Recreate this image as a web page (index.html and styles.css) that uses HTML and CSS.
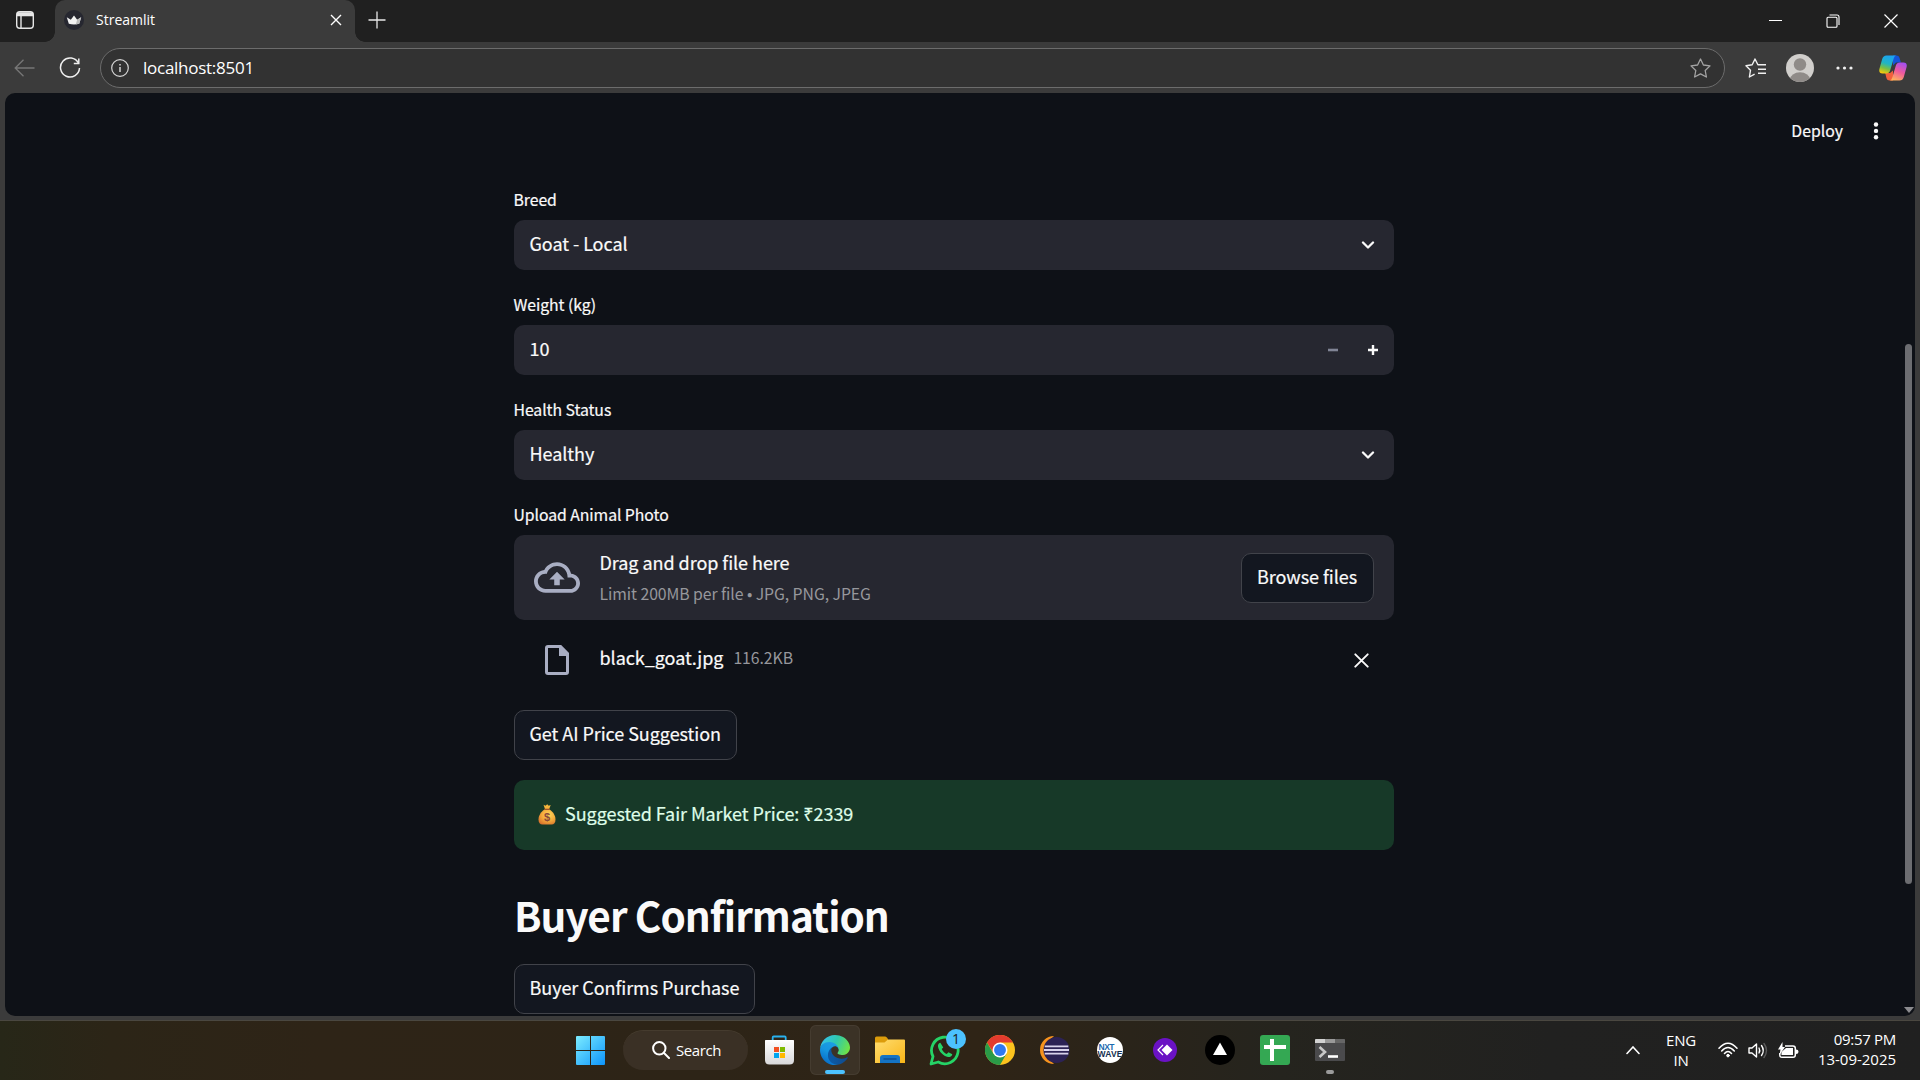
FILE: index.html
```html
<!DOCTYPE html>
<html lang="en">
<head>
<meta charset="utf-8">
<title>Streamlit</title>
<link rel="stylesheet" href="styles.css">
</head>
<body>
<div class="screen">
  <header class="titlebar">
    <div class="tab-actions">
      <svg width="20" height="20" viewBox="0 0 20 20" fill="none" stroke="#e6e6e6" stroke-width="1.4"><rect x="1.7" y="1.7" width="16.6" height="16.6" rx="3"/><path d="M2 3.4h16M2 5h16" stroke-width="2.4"/><path d="M6 6v12"/></svg>
    </div>
    <div class="tab">
      <svg class="favicon" width="20" height="20" viewBox="0 0 20 20"><circle cx="10" cy="10" r="10" fill="#262730"/><path d="M2.8 7.2l4 2.6L10 5.6l3.2 4.2 4-2.6-2 6.6q-5.2 1.600-10.400 0z" fill="#f2f2f2"/><path d="M13.200 9.800l4-2.600-2 6.600-3.500.7z" fill="#bdbdbd"/></svg>
      <span class="tab-title">Streamlit</span>
      <svg class="tab-close" width="12" height="12" viewBox="0 0 12 12" stroke="#fff" stroke-width="1.4"><path d="M1 1l10 10M11 1L1 11"/></svg>
    </div>
    <svg class="new-tab" width="18" height="18" viewBox="0 0 18 18" stroke="#e8e8e8" stroke-width="1.3"><path d="M9 .5v17M.5 9h17"/></svg>
    <div class="window-controls">
      <svg width="13" height="13" viewBox="0 0 13 13" stroke="#fff" stroke-width="1"><path d="M0 5.500h13"/></svg>
      <svg width="14" height="14" viewBox="0 0 14 14" stroke="#fff" stroke-width="1.1" fill="none"><rect x="1" y="3.300" width="10" height="10" rx="1"/><path d="M3.500 1h7.500q2 0 2 2v8"/></svg>
      <svg width="14" height="14" viewBox="0 0 14 14" stroke="#fff" stroke-width="1.2"><path d="M.5.5l13 13M13.500.5l-13 13"/></svg>
    </div>
  </header>

  <nav class="toolbar">
    <svg class="back" width="21" height="18" viewBox="0 0 21 18" fill="none" stroke="#777" stroke-width="1.3"><path d="M20.500 9H1.200M9.500.8L1.200 9l8.300 8.200"/></svg>
    <svg class="reload" width="22" height="22" viewBox="0 0 22 22" fill="none" stroke="#efefef" stroke-width="1.500"><path d="M19.500 6.200A9.500 9.500 0 1 0 20.500 11"/><path d="M19.800 1.500v5h-5"/></svg>
    <div class="address">
      <svg width="18" height="18" viewBox="0 0 18 18" fill="none" stroke="#d6d6d6" stroke-width="1.200"><circle cx="9" cy="9" r="8.300"/><path d="M9 8v5M9 5v1.500" stroke-width="1.500"/></svg>
      <span class="url">localhost:8501</span>
      <svg class="star" width="21" height="20" viewBox="0 0 21 20" fill="none" stroke="#a4a4a4" stroke-width="1.300" stroke-linejoin="round"><path d="M10.500 1l2.900 6 6.600.9-4.800 4.600 1.200 6.500-5.900-3.100L4.600 19l1.200-6.500L1 7.900 7.600 7z"/></svg>
    </div>
    <div class="browser-tools">
      <svg width="22" height="20" viewBox="0 0 22 20" fill="none" stroke="#f0f0f0" stroke-width="1.400" stroke-linejoin="round"><path d="M13 6.800h-.1L10 1 7.200 6.800 1 7.800l4.500 4.400L4.400 19l5.200-2.800M13 6.800h8M13 11.200h8M13 15.200h8"/></svg>
      <svg class="avatar" width="28" height="28" viewBox="0 0 28 28"><defs><clipPath id="avatar"><circle cx="14" cy="14" r="14"/></clipPath></defs><g clip-path="url(#avatar)"><rect width="28" height="28" fill="#d1cfcc"/><circle cx="14" cy="10.500" r="6.200" fill="#8f8b88"/><ellipse cx="14" cy="25.500" rx="10" ry="7.200" fill="#8f8b88"/></g></svg>
      <svg class="more" width="17" height="4" viewBox="0 0 17 4" fill="#f0f0f0"><circle cx="2" cy="2" r="1.600"/><circle cx="8.500" cy="2" r="1.600"/><circle cx="15" cy="2" r="1.600"/></svg>
      <svg class="copilot" width="28" height="26" viewBox="0 0 28 26"><defs>
        <linearGradient id="cp1" x1=".6" y1="0" x2=".3" y2="1"><stop offset="0" stop-color="#1ba2f2"/><stop offset=".45" stop-color="#21b5c4"/><stop offset=".72" stop-color="#78c046"/><stop offset="1" stop-color="#f7c90c"/></linearGradient>
        <linearGradient id="cp2" x1=".7" y1="0" x2=".3" y2="1"><stop offset="0" stop-color="#a44ff0"/><stop offset=".5" stop-color="#f05a9c"/><stop offset="1" stop-color="#ffb35c"/></linearGradient></defs>
        <path d="M14 .5h3.500q2.300 0 3 2.300l1.400 4.700H17l-3 3z" fill="#1554d8"/>
        <path d="M14 25.500h-3.500q-2.300 0-3-2.300L6.200 18H11l3-2.500z" fill="#f2603c"/>
        <path d="M7.500.5H17q-1.600.6-2.300 3l-3.500 11.800Q10.200 18.500 7 18.500H3.500Q-.5 18.500.4 14L3.200 4Q4.200.5 7.500.5z" fill="url(#cp1)"/>
        <path d="M20.500 25.500H11q1.600-.6 2.300-3l3.500-11.800q1-3.200 4.200-3.200h3.500q4 0 3.100 4.500L24.800 22q-1 3.500-4.300 3.500z" fill="url(#cp2)"/></svg>
    </div>
  </nav>

  <div class="viewport">
    <div class="app-header">
      <span class="deploy">Deploy</span>
      <svg width="6" height="18" viewBox="0 0 6 18" fill="#fafafa"><circle cx="3" cy="2.500" r="2.200"/><circle cx="3" cy="8.900" r="2.200"/><circle cx="3" cy="15.300" r="2.200"/></svg>
    </div>
    <main class="column">
      <section class="field">
        <label class="label">Breed</label>
        <div class="control"><span class="text">Goat - Local</span>
          <svg class="chevron" width="14" height="9" viewBox="0 0 14 9" fill="none" stroke="#fafafa" stroke-width="2.300" stroke-linecap="round" stroke-linejoin="round"><path d="M2 1.500l5 5 5-5"/></svg></div>
      </section>
      <section class="field">
        <label class="label">Weight (kg)</label>
        <div class="control"><span class="text">10</span>
          <div class="steppers">
            <svg width="10" height="10" viewBox="0 0 10 10"><path d="M0 3.700h10v2.600H0z" fill="#808495"/></svg>
            <svg width="10" height="10" viewBox="0 0 10 10"><path d="M0 5h10M5 0v10" stroke="#fafafa" stroke-width="2.400"/></svg>
          </div></div>
      </section>
      <section class="field">
        <label class="label">Health Status</label>
        <div class="control"><span class="text">Healthy</span>
          <svg class="chevron" width="14" height="9" viewBox="0 0 14 9" fill="none" stroke="#fafafa" stroke-width="2.300" stroke-linecap="round" stroke-linejoin="round"><path d="M2 1.500l5 5 5-5"/></svg></div>
      </section>
      <section class="field">
        <label class="label">Upload Animal Photo</label>
        <div class="dropzone">
          <svg class="cloud" width="46" height="31" viewBox="0 4 24 16" fill="#a9aec3"><path d="M19.350 10.040C18.670 6.590 15.640 4 12 4 9.110 4 6.600 5.640 5.350 8.040 2.340 8.360 0 10.910 0 14c0 3.310 2.690 6 6 6h13c2.760 0 5-2.240 5-5 0-2.640-2.050-4.780-4.650-4.960zM19 18H6c-2.210 0-4-1.790-4-4s1.790-4 4-4h.71C7.370 7.690 9.480 6 12 6c3.040 0 5.500 2.460 5.500 5.500v.5H19c1.660 0 3 1.340 3 3s-1.340 3-3 3zM8 13h2.550v3h2.900v-3H16l-4-4z"/></svg>
          <div class="drop-text">
            <span class="text">Drag and drop file here</span>
            <span class="small">Limit 200MB per file • JPG, PNG, JPEG</span>
          </div>
          <button class="button"><span class="text">Browse files</span></button>
        </div>
        <div class="file-row">
          <svg width="24" height="30" viewBox="0 0 24 30" fill="none"><path d="M3 1.500h12.500l7 7V27q0 1.500-1.500 1.500H3q-1.500 0-1.500-1.500V3Q1.500 1.500 3 1.500z" stroke="#a9aec3" stroke-width="3"/><path d="M14 0v11h10v-2.500L15.500 0z" fill="#a9aec3"/></svg>
          <span class="text file-name">black_goat.jpg</span>
          <span class="small file-size">116.2KB</span>
          <svg class="remove" width="15" height="15" viewBox="0 0 15 15" stroke="#fafafa" stroke-width="1.900" stroke-linecap="round"><path d="M1.300 1.300l12.400 12.400M13.700 1.300L1.300 13.700"/></svg>
        </div>
      </section>
      <button class="button"><span class="text">Get AI Price Suggestion</span></button>
      <div class="alert">
        <svg width="18" height="21" viewBox="0 0 18 21"><defs><radialGradient id="bag" cx=".6" cy=".35" r=".75"><stop offset="0" stop-color="#ffd75a"/><stop offset=".55" stop-color="#f3a83a"/><stop offset="1" stop-color="#d8702c"/></radialGradient></defs><path d="M5.500.8l2 1L9.200.3l1.500 1.400 2-.8-1.500 4H7z" fill="#f6b53c"/><path d="M6.500 5.500h5c3 2 6 5.500 6 10 0 3.500-1.500 5-4 5h-9c-2.500 0-4-1.500-4-5 0-4.500 3-8 6-10z" fill="url(#bag)"/><path d="M6.200 5.300h5.600" stroke="#a4552a" stroke-width="1.300"/><text x="9" y="17.400" font-size="11" font-weight="bold" text-anchor="middle" fill="#8a4a3a" font-family="Liberation Sans, sans-serif">$</text></svg>
        <span class="text">Suggested Fair Market Price: ₹2339</span>
      </div>
      <h2 class="heading">Buyer Confirmation</h2>
      <button class="button"><span class="text">Buyer Confirms Purchase</span></button>
    </main>
    <div class="scroll-thumb"></div>
    <div class="scroll-arrow"></div>
  </div>

  <footer class="taskbar">
    <div class="apps">
      <div class="app"><svg width="29" height="29" viewBox="0 0 29 29"><defs><linearGradient id="win" x1="0" y1="0" x2="1" y2="1"><stop offset="0" stop-color="#7cecff"/><stop offset="1" stop-color="#0d94fb"/></linearGradient></defs><path d="M1 0h13v14H0V1q0-1 1-1zM15 0h13q1 0 1 1v13H15zM0 15h14v14H1q-1 0-1-1zM15 15h14v13q0 1-1 1H15z" fill="url(#win)"/></svg></div>
      <div class="search"><svg width="18" height="18" viewBox="0 0 18 18" fill="none" stroke="#fff" stroke-width="2" stroke-linecap="round"><circle cx="7.300" cy="7.300" r="6.200"/><path d="M12 12l5 5"/></svg><span>Search</span></div>
      <div class="app"><svg width="30" height="30" viewBox="0 0 30 30"><defs><linearGradient id="store" x1="0" y1="0" x2="0" y2="1"><stop offset="0" stop-color="#fff"/><stop offset="1" stop-color="#d8d8da"/></linearGradient></defs><path d="M7.700 6V2.500q0-1 1-1h11q1 0 1 1V6" fill="none" stroke="#29b2ef" stroke-width="1.800"/><path d="M.5 5h28q.5 0 .5.800V25q0 4.500-4.500 4.500h-20Q0 29.500 0 25V5.800Q0 5 .5 5z" fill="url(#store)"/><path d="M9 12h5v5H9z" fill="#f25022"/><path d="M15 12h5v5h-5z" fill="#7fba00"/><path d="M9 18h5v5H9z" fill="#00a4ef"/><path d="M15 18h5v5h-5z" fill="#ffb900"/></svg></div>
      <div class="app active"><svg width="30" height="30" viewBox="0 0 256 256"><defs><linearGradient id="e1" x1=".25" y1=".7" x2="1" y2=".7"><stop offset="0" stop-color="#0c59a4"/><stop offset="1" stop-color="#114a8b"/></linearGradient><linearGradient id="e2" x1=".6" y1=".1" x2=".2" y2="1"><stop offset="0" stop-color="#1b9de2"/><stop offset=".4" stop-color="#1595df"/><stop offset="1" stop-color="#0566c4"/></linearGradient><linearGradient id="e3" x1="0" y1=".3" x2="1" y2=".6"><stop offset="0" stop-color="#35c1f1"/><stop offset=".5" stop-color="#2fc8ac"/><stop offset="1" stop-color="#70e345"/></linearGradient></defs>
        <path fill="url(#e1)" d="M231 190.500c-3.400 1.800-6.900 3.400-10.500 4.700-11.500 4.300-23.600 6.500-35.900 6.500-47.300 0-88.500-32.500-88.500-74.300.1-11.400 6.400-21.900 16.400-27.300-42.800 1.800-53.800 46.400-53.800 72.500 0 74 68.100 81.400 82.800 81.400 7.900 0 19.800-2.300 27-4.600l1.300-.4c27.600-9.500 51-28.100 66.600-52.800 1.200-1.900.6-4.300-1.200-5.500-1.300-.8-2.900-.9-4.200-.2z"/>
        <path fill="url(#e2)" d="M105.700 241.400c-8.900-5.500-16.600-12.800-22.700-21.300-26.300-36-18.400-86.500 17.600-112.800 3.800-2.700 7.700-5.200 11.900-7.200 3.100-1.500 8.400-4.100 15.500-4 10.100.1 19.600 4.900 25.700 13 4 5.400 6.300 11.900 6.400 18.700 0-.2 24.500-79.600-80-79.600C36.200 48.200.2 89.900.2 126.400c-.2 19.300 4 38.500 12.100 56 27.600 58.800 94.800 87.600 156.400 67.100-21.100 6.600-44.100 3.700-63-8.100z"/>
        <path fill="url(#e3)" d="M152.300 148.900c-.8 1-3.300 2.500-3.300 5.700 0 2.600 1.700 5.100 4.700 7.200 14.400 10 41.500 8.700 41.600 8.700 10.700 0 21.100-2.900 30.300-8.300 18.800-11 30.400-31.100 30.400-52.900.3-22.400-8-37.300-11.300-43.900C223.500 23.900 177.700 0 128 0 58 0 1 56.200 0 126.200c.5-36.500 36.800-66 80-66 3.500 0 23.500.3 42 10.100 16.300 8.600 24.900 18.900 30.800 29.200 6.200 10.700 7.300 24.100 7.300 29.500s-2.700 13.300-7.800 19.900z"/></svg></div>
      <div class="app"><svg width="30" height="28" viewBox="0 0 30 28"><defs><linearGradient id="fold" x1="0" y1="0" x2="1" y2="1"><stop offset="0" stop-color="#ffdd70"/><stop offset="1" stop-color="#f9b517"/></linearGradient></defs><path d="M0 2Q0 .5 1.500.5H10q1 0 1.800.9L13 3v5H0z" fill="#dc9c0b"/><path d="M0 6.500h9.500l3.500-3h16q1 0 1 1V27H0z" fill="url(#fold)"/><path d="M5 27v-5q0-3 3-3h14q3 0 3 3v5z" fill="#1473c4"/><path d="M8.500 23h13" stroke="#0b4a8c" stroke-width="1.300"/></svg></div>
      <div class="app"><svg width="32" height="32" viewBox="0 0 32 32"><path d="M2 30l2-7.500A13.300 13.300 0 1 1 9.300 28z" fill="none" stroke="#25d366" stroke-width="2.800" stroke-linejoin="round"/><path d="M11.300 8.800c-1.800.5-2.600 2.200-2.300 4 1 5 5.200 9.200 10 10.200 2 .3 4-.8 4.300-2.800l-3.800-2-1.800 1.800c-2.200-.9-4-2.700-5-5l1.600-1.600z" fill="#25d366"/></svg><span class="badge">1</span></div>
      <div class="app"><svg width="30" height="30" viewBox="0 0 48 48"><circle cx="24" cy="24" r="24" fill="#fcc31e"/><path d="M24 12h20.800A24 24 0 0 0 3.200 12L14 29z" fill="#e33b2e"/><path d="M3.200 12A24 24 0 0 0 24 48L34.400 30 24 24 13.600 30z" fill="#2a9a48"/><circle cx="24" cy="24" r="12" fill="#fff"/><circle cx="24" cy="24" r="9.500" fill="#3079f0"/></svg></div>
      <div class="app"><svg width="30" height="30" viewBox="0 0 30 30"><path d="M14 1A14 14 0 0 0 14 29 18 18 0 0 1 14 1z" fill="#f7941e"/><circle cx="16.500" cy="15" r="13" fill="#2c2255"/><path d="M4.700 11.300h23.600M4 15h25M4.700 18.700h23.600" stroke="#d9d3ec" stroke-width="1.800"/></svg></div>
      <div class="app"><svg width="28" height="28" viewBox="0 0 28 28"><defs><clipPath id="nxt"><circle cx="14" cy="14" r="13"/></clipPath></defs><circle cx="14" cy="14" r="13" fill="#fff"/><g clip-path="url(#nxt)" font-family="Liberation Sans, sans-serif" font-weight="bold" font-size="8.500"><text x="2.500" y="13.500" fill="#1c6bb0" textLength="16">NXT</text><text x="1.500" y="21" fill="#16304f" textLength="25">WAVE</text></g></svg></div>
      <div class="app"><svg width="24" height="24" viewBox="0 0 24 24"><circle cx="12" cy="12" r="12" fill="#6a12c4"/><path d="M14 6.500l5.500 5.500-5.500 5.500L8.500 12z" fill="#fff"/><path d="M10 7l-5 5 5 5" fill="none" stroke="#fff" stroke-width="1.200"/></svg></div>
      <div class="app"><svg width="30" height="30" viewBox="0 0 30 30"><circle cx="15" cy="15" r="15" fill="#000"/><path d="M15 7.500l7 12.500H8z" fill="#fff"/></svg></div>
      <div class="app"><svg width="30" height="30" viewBox="0 0 30 30"><rect width="30" height="30" rx="3" fill="#34a853"/><path d="M4 12h22M12 4v22" stroke="#fff" stroke-width="4"/></svg></div>
      <div class="app running"><svg width="30" height="22" viewBox="0 0 30 22"><rect width="30" height="22" rx="1" fill="#4a4a4c"/><path d="M0 4V1q0-1 1-1h9v4z" fill="#d2d2d2"/><path d="M10 0h10v4H10z" fill="#999"/><path d="M20 0h9q1 0 1 1v3H20z" fill="#666"/><path d="M4.500 8l5.500 5-5.500 5" fill="none" stroke="#c8c8c8" stroke-width="2.600"/><path d="M13 17.500h10" stroke="#fff" stroke-width="2.600"/></svg></div>
    </div>
    <div class="tray">
      <svg class="caret" width="14" height="9" viewBox="0 0 14 9" fill="none" stroke="#fff" stroke-width="1.600" stroke-linecap="round"><path d="M1 7.500L7 1l6 6.500"/></svg>
      <div class="lang"><span>ENG</span><span>IN</span></div>
      <div class="status">
        <svg width="20" height="16" viewBox="0 0 20 16" fill="none" stroke="#fff" stroke-width="1.500" stroke-linecap="round"><path d="M1 6.200Q10-3.800 19 6.200M3.700 9Q10 2 16.300 9M6.500 11.500Q10 7.500 13.500 11.500"/><circle cx="10" cy="13.600" r="1.300" fill="#fff" stroke-width="1"/></svg>
        <svg width="20" height="17" viewBox="0 0 20 17" fill="none" stroke="#fff" stroke-width="1.400" stroke-linejoin="round" stroke-linecap="round"><path d="M1 6h3l4.500-4v13L4 11H1zM11 6q1.500 2.500 0 5M13.500 3.500q3.500 5 0 10"/><path d="M16 1.500q5 7 0 14" stroke="#5a5a5a"/></svg>
        <svg width="21" height="17" viewBox="0 0 21 17"><path d="M7 4h8q2.300 0 2.300 2.300V13q0 2.300-2.300 2.300H4Q1.800 15.300 1.800 13v-2" fill="none" stroke="#fff" stroke-width="1.500"/><path d="M18 7.500q2.500 0 2.500 2.200T18 12z" fill="#fff"/><path d="M8 6h7v7H3.500v-3z" fill="#fff"/><path d="M4.500 0L0 7.500h2.500L1.500 13l5.500-8H4.500z" fill="#fff"/></svg>
      </div>
      <div class="clock"><span class="time">09:57 PM</span><span>13-09-2025</span></div>
    </div>
  </footer>
</div>
</body>
</html>
```
FILE: styles.css
```css
* { box-sizing: border-box; }
body {
  margin: 0;
  width: 1920px;
  height: 1080px;
  overflow: hidden;
  background: #3b3b3b;
  color: #fff;
  font-family: "Open Sans", "Noto Sans", sans-serif;
}
svg { display: block; flex: none; }
.screen { display: flex; flex-direction: column; height: 1080px; }

/* Browser title bar */
.titlebar {
  display: flex;
  align-items: stretch;
  height: 42px;
  background: #202020;
}
.tab-actions {
  width: 55px;
  display: flex;
  align-items: center;
  justify-content: center;
  padding: 0 5px 2px 0;
}
.tab {
  position: relative;
  width: 300px;
  display: flex;
  align-items: center;
  padding: 0 13px 2px 9px;
  border-radius: 10px 10px 0 0;
  background: #3b3b3b;
}
/* Concave feet where the tab meets the toolbar */
.tab::before, .tab::after {
  content: "";
  position: absolute;
  bottom: 0;
  width: 10px;
  height: 10px;
}
.tab::before { left: -10px; background: radial-gradient(circle at 0 0, transparent 9.5px, #3b3b3b 10px); }
.tab::after { right: -10px; background: radial-gradient(circle at 100% 0, transparent 9.5px, #3b3b3b 10px); }
.tab-title { margin-left: 12px; font-size: 14px; letter-spacing: 0; line-height: 20px; white-space: nowrap; }
.tab-close { margin-left: auto; }
.new-tab { margin: 11px 0 0 13px; }
.window-controls { display: flex; align-items: center; gap: 44px; margin-left: auto; padding: 0 22px 0 0; }

/* Navigation bar */
.toolbar { display: flex; align-items: center; height: 51px; padding: 1px 13px 0 14px; background: #3b3b3b; }
.reload { margin-left: 24px; }
.address {
  display: flex;
  align-items: center;
  width: 1625px;
  height: 40px;
  margin-left: 19px;
  padding: 0 13px 0 10px;
  border: 1px solid #6c6c6c;
  border-radius: 20px;
  background: #323232;
}
.url { margin-left: 14px; font-size: 17px; letter-spacing: -0.26px; line-height: 24px; white-space: nowrap; }
.star { margin-left: auto; }
.browser-tools { display: flex; align-items: center; margin-left: auto; }
.avatar { margin-left: 19px; }
.more { margin-left: 22px; }
.copilot { margin-left: 26px; }

/* Streamlit page */
.viewport {
  position: relative;
  display: flex;
  flex-direction: column;
  height: 923px;
  margin: 0 5px 5px;
  overflow: hidden;
  border-radius: 10px;
  background: #0e1117;
  color: #fafafa;
  font-family: "Noto Sans CJK JP", "Noto Sans", sans-serif;
  -webkit-text-stroke: 0.2px currentColor;
}
.app-header {
  flex: none;
  display: flex;
  align-items: center;
  justify-content: flex-end;
  gap: 30px;
  height: 75px;
  padding-right: 36px;
}
.deploy { font-size: 15.8px; line-height: 24px; }
.column {
  flex: none;
  display: flex;
  flex-direction: column;
  align-items: flex-start;
  gap: 20px;
  width: 880px;
  margin: 17px 0 0 509px;
}
.field { width: 100%; }
.label { display: block; height: 35px; margin-left: -0.5px; font-size: 15.8px; line-height: 30px; letter-spacing: -0.07px; white-space: nowrap; }
.text { font-size: 18px; line-height: 24px; margin-top: -4px; letter-spacing: -0.05px; white-space: nowrap; }
.small { font-size: 15.8px; line-height: 24px; letter-spacing: -0.07px; color: #96979c; -webkit-text-stroke: 0; white-space: nowrap; }
.control {
  display: flex;
  align-items: center;
  justify-content: space-between;
  height: 50px;
  padding: 0 19px 0 15.500px;
  border-radius: 10px;
  background: #262730;
}
.steppers { display: flex; gap: 30px; margin-right: -3px; }
.dropzone {
  display: flex;
  align-items: center;
  height: 85px;
  padding: 0 20px;
  border-radius: 10px;
  background: #262730;
}
.drop-text { display: flex; flex-direction: column; gap: 8px; margin-left: 19.500px; padding-top: 4px; }
.button {
  flex: none;
  display: flex;
  align-items: center;
  height: 50px;
  padding: 0 15px 0 14.500px;
  border: 1px solid #41434a;
  border-radius: 10px;
  background: #131720;
  color: #fafafa;
  font-family: inherit;
}
.dropzone .button { width: 133px; margin-left: auto; padding: 0 0 0 15px; }
.file-row { display: flex; align-items: center; height: 70px; padding: 10px 25px 0 31px; }
.file-name { margin: -7px 0 0 30.500px; }
.file-size { margin: -4px 0 0 10px; }
.remove { margin-left: auto; }
.alert {
  display: flex;
  align-items: center;
  gap: 9px;
  width: 100%;
  height: 70px;
  padding: 0 24px;
  border-radius: 10px;
  background: #173928;
  color: #dffde9;
}
.alert svg { margin-top: -2px; }
.heading {
  margin: 0;
  padding-top: 18px;
  height: 74px;
  font-size: 40.500px;
  line-height: 54px;
  font-weight: 700;
  letter-spacing: -0.98px;
  -webkit-text-stroke: 0;
  white-space: nowrap;
}
.scroll-thumb { position: absolute; left: 1900px; top: 251px; width: 7px; height: 540px; border-radius: 4px; background: #6c6d71; }
.scroll-arrow {
  position: absolute;
  left: 1899px;
  top: 914px;
  border: 5px solid transparent;
  border-top: 6px solid #8b8b8f;
  border-bottom: 0;
}

/* Windows taskbar */
.taskbar {
  display: flex;
  align-items: center;
  height: 60px;
  margin-top: -1px;
  padding-bottom: 1px;
  flex: none;
  border-top: 1px solid #4a4740;
  background: linear-gradient(90deg, #272718 0, #2c2517 110px, #2e2417 320px, #2d2417 700px, #2f2416 980px, #25241e 1280px, #212120 1550px, #202020 1920px);
}
.apps { display: flex; align-items: center; gap: 5px; margin-left: 565px; }
.app {
  position: relative;
  display: flex;
  align-items: center;
  justify-content: center;
  width: 50px;
  height: 50px;
  border-radius: 6px;
}
.active { background: #3b3226; box-shadow: inset 0 0 0 1px #453c30; }
.active::after, .running::after {
  content: "";
  position: absolute;
  left: 15px;
  bottom: 1px;
  width: 20px;
  height: 4px;
  border-radius: 2px;
  background: #4cc2ff;
}
.running::after { left: 21px; width: 8px; background: #9b9b9b; }
.search {
  display: flex;
  align-items: center;
  gap: 6px;
  width: 125px;
  height: 40px;
  margin: 0 2px 0 3px;
  padding: 0 0 1px 29px;
  border-radius: 20px;
  border-top: 1px solid #453b2e;
  background: #3a3025;
  font-size: 15px;
  letter-spacing: -0.4px;
}
.badge {
  position: absolute;
  left: 26px;
  top: 4px;
  width: 20px;
  height: 20px;
  border-radius: 50%;
  background: #4cc2ff;
  color: #1c1c1c;
  font-size: 14px;
  line-height: 20px;
  text-align: center;
}
.tray {
  display: flex;
  align-items: center;
  margin-left: auto;
  padding-right: 24px;
  font-size: 15px;
  line-height: 20px;
  letter-spacing: -0.4px;
}
.lang { display: flex; flex-direction: column; align-items: center; width: 40px; margin-left: 21px; letter-spacing: -0.2px; }
.status { display: flex; align-items: center; gap: 10px; margin-left: 17px; }
.clock { display: flex; flex-direction: column; align-items: flex-end; width: 90px; margin-left: 7px; padding-bottom: 3px; letter-spacing: -0.02px; white-space: nowrap; }
.time { letter-spacing: -0.3px; }
```
